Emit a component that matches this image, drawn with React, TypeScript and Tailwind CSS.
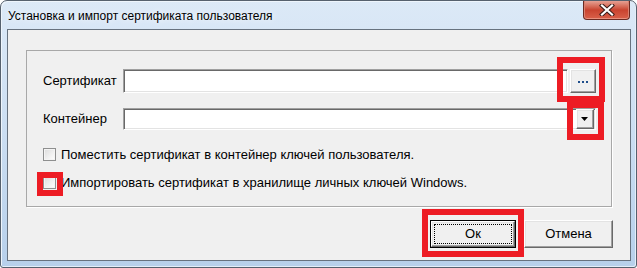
import { useState } from "react";

const font = { fontFamily: '"Liberation Sans", Arial, sans-serif' };

// classic 3D raised button border
const raised =
  "border border-t-white border-l-white border-b-[#696969] border-r-[#696969] shadow-[inset_-1px_-1px_0_#a0a0a0,inset_1px_1px_0_#e3e3e3] bg-[#f0f0f0]";

// classic 3D sunken field border
const sunken =
  "border border-t-[#a0a0a0] border-l-[#a0a0a0] border-b-white border-r-white shadow-[inset_1px_1px_0_#696969,inset_-1px_-1px_0_#e3e3e3] bg-white";

const CheckBox = ({ checked, onChange }: { checked: boolean; onChange: () => void }) => (
  <button
    onClick={onChange}
    className="w-[13px] h-[13px] border border-[#8e8f8f] bg-gradient-to-br from-[#dcdcdc] to-white shadow-[inset_0_0_0_1px_#f4f4f4] flex items-center justify-center shrink-0"
  >
    {checked && (
      <svg width="9" height="9" viewBox="0 0 9 9">
        <path d="M1 4.5 L3.5 7 L8 1.5" stroke="#1c3d6e" strokeWidth="1.6" fill="none" />
      </svg>
    )}
  </button>
);

const RedBox = ({ className }: { className: string }) => (
  <div className={`absolute border-[6px] border-[#ed1c24] pointer-events-none ${className}`} />
);

export default function App() {
  const [putToContainer, setPutToContainer] = useState(false);
  const [importWin, setImportWin] = useState(false);

  return (
    <div className="relative w-[637px] h-[268px] bg-white" style={font}>
      <div className="w-full h-full rounded-t-[7px] rounded-b-[3px] border border-[#56616e] bg-gradient-to-b from-[#dce9f7] via-[#cbdef2] to-[#b7d0eb] flex flex-col pl-[6px] pr-[5px] pb-[6px] shadow-[inset_1px_1px_0_#eef5fc,inset_-1px_-1px_0_#e4eef9]">
        {/* title bar */}
        <div className="h-[28px] flex justify-between shrink-0">
          <div className="pl-[1px] pt-[6px] text-[12px] text-black [text-shadow:0_0_6px_#ffffff]">
            Установка и импорт сертификата пользователя
          </div>
          <div className="mr-[1px] w-[47px] h-[19px] rounded-b-[4px] border border-t-0 border-[#6b2a22] bg-gradient-to-b from-[#e5a093] via-[#c9432f] to-[#d9604a] shadow-[inset_0_-1px_0_#e8907e,inset_1px_0_0_#d8806f,inset_-1px_0_0_#d8806f] flex items-center justify-center">
            <svg width="16" height="12" viewBox="0 0 16 12">
              <path d="M3 1.5 L13 10.5 M13 1.5 L3 10.5" stroke="#3b1c18" strokeWidth="4.2" strokeLinecap="square" />
              <path d="M3 1.5 L13 10.5 M13 1.5 L3 10.5" stroke="#ffffff" strokeWidth="2.2" strokeLinecap="square" />
            </svg>
          </div>
        </div>

        {/* client area */}
        <div className="flex-1 border border-[#67727f] bg-[#f0f0f0] pl-[18px] pr-[17px] pt-[20px] text-[13px] text-black flex flex-col">
          {/* group box */}
          <div className="w-[586px] h-[157px] border border-[#a8a8a8] shadow-[1px_1px_0_#ffffff] pl-[16px] pr-[15px] pt-[17px] flex flex-col">
            <div className="flex items-center h-[25px]">
              <span className="w-[80px] shrink-0">Сертификат</span>
              <div className={`${sunken} h-[24px] w-[446px] mt-[1px]`} />
              <button className={`${raised} ml-[2px] w-[26px] h-[24px] flex items-center justify-center`}>
                <span className="flex gap-[2px] mt-[3px]">
                  <span className="w-[2px] h-[2px] bg-[#1f4e8c]" />
                  <span className="w-[2px] h-[2px] bg-[#1f4e8c]" />
                  <span className="w-[2px] h-[2px] bg-[#1f4e8c]" />
                </span>
              </button>
            </div>

            <div className="flex items-center h-[22px] mt-[15px]">
              <span className="w-[80px] shrink-0">Контейнер</span>
              <div className={`${sunken} h-[22px] w-[473px] flex justify-end items-center pr-[1px]`}>
                <button className={`${raised} w-[18px] h-[20px] flex items-center justify-center`}>
                  <svg width="8" height="5" viewBox="0 0 8 5">
                    <path d="M0 0 H7 L3.5 4 Z" fill="#000" />
                  </svg>
                </button>
              </div>
            </div>

            <label className="flex items-center gap-[5px] mt-[17px] h-[15px]">
              <CheckBox checked={putToContainer} onChange={() => setPutToContainer(!putToContainer)} />
              <span>Поместить сертификат в контейнер ключей пользователя.</span>
            </label>

            <label className="flex items-center gap-[5px] mt-[13px] h-[15px]">
              <CheckBox checked={importWin} onChange={() => setImportWin(!importWin)} />
              <span>Импортировать сертификат в хранилище личных ключей Windows.</span>
            </label>
          </div>

          {/* buttons */}
          <div className="flex justify-end gap-[8px] mt-[13px]">
            <button className="w-[86px] h-[28px] border border-black p-0">
              <div className={`${raised} w-full h-full flex items-center justify-center`}>
                <div className="w-[78px] h-[20px] border border-dotted border-black flex items-center justify-center">
                  Ок
                </div>
              </div>
            </button>
            <button className={`${raised} w-[89px] h-[28px] flex items-center justify-center`}>Отмена</button>
          </div>
        </div>
      </div>

      {/* red highlight marks */}
      <RedBox className="left-[557px] top-[57px] w-[48px] h-[45px]" />
      <RedBox className="left-[567px] top-[102px] w-[37px] h-[38px]" />
      <RedBox className="left-[37px] top-[172px] w-[26px] h-[24px]" />
      <RedBox className="left-[422px] top-[209px] w-[102px] h-[48px]" />
    </div>
  );
}
